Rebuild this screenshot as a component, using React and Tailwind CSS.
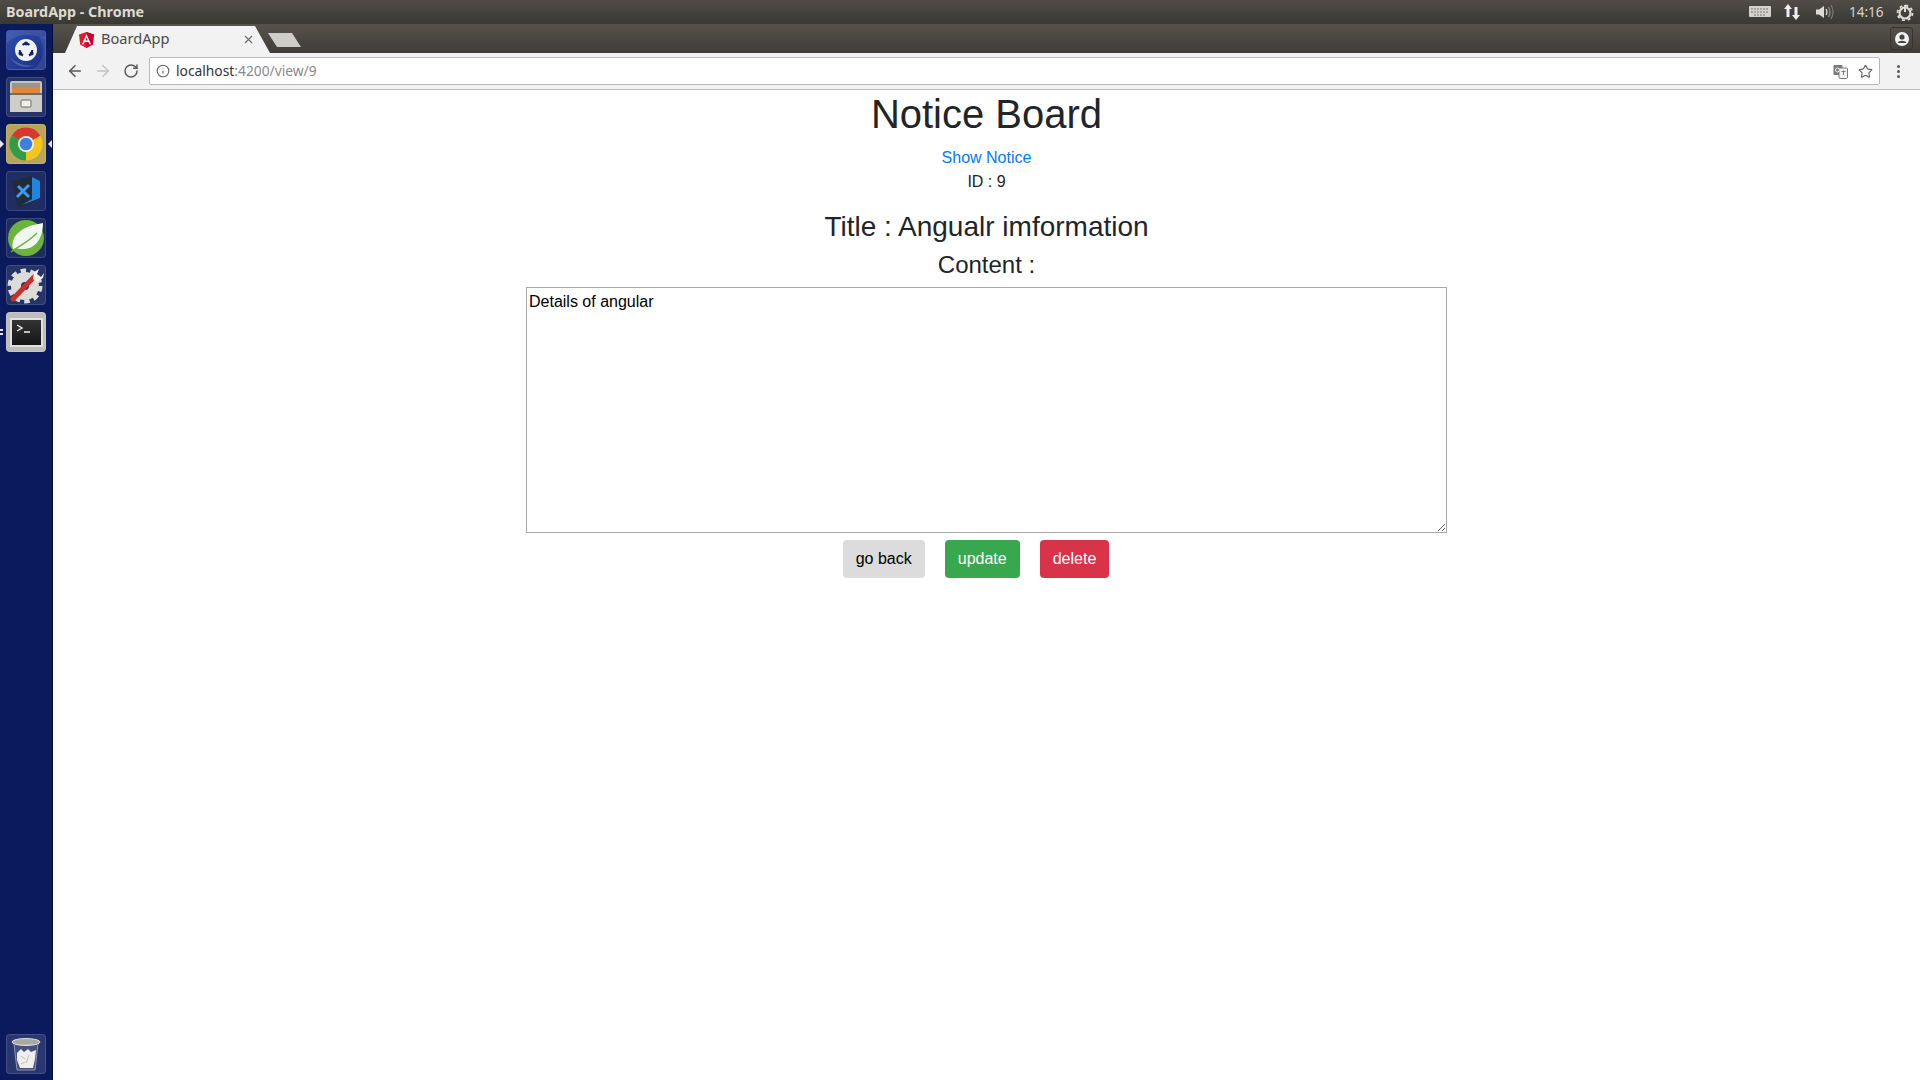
import React from "react";
import { ArrowLeft, ArrowRight, RotateCw, Info, Star, X } from "lucide-react";

const Tile = ({ className = "", children }) => (
  <div className={`w-10 h-10 rounded-[4px] flex items-center justify-center overflow-hidden shrink-0 border border-[#ffffff22] ${className}`}>
    {children}
  </div>
);

const Launcher = () => (
  <aside className="w-[53px] shrink-0 flex flex-col items-center bg-[#0a1a5c] border-r border-[#050d30] pt-[6px] pb-[6px] gap-[7px] relative">
    <Tile className="bg-linear-to-br from-[#2f4dac] to-[#1b2f86]">
      <svg width="38" height="38" viewBox="0 0 38 38">
        <path d="M0 12 C10 2 26 2 38 8 V0 H0 Z" fill="#ffffff18" />
        <path d="M26 38 C38 30 38 16 32 6 L38 6 V38 Z" fill="#ffffff18" />
        <path d="M3 26 C8 36 20 38 28 34 C18 36 8 32 3 26 Z" fill="#ffffff30" />
        <circle cx="19" cy="19" r="11" fill="#f1f2f8" />
        <path d="M15.500 13.800 A6.300 6.300 0 0 1 22.500 13.800 M25.300 19 A6.300 6.300 0 0 1 22 24.500 M16 24.500 A6.300 6.300 0 0 1 12.700 19" fill="none" stroke="#17245f" strokeWidth="2" />
        <circle cx="19" cy="12.500" r="1.900" fill="#17245f" />
        <circle cx="13.300" cy="22.500" r="1.900" fill="#17245f" />
        <circle cx="24.700" cy="22.500" r="1.900" fill="#17245f" />
      </svg>
    </Tile>
    <Tile className="bg-[#263468]">
      <svg width="36" height="36" viewBox="0 0 36 36">
        <path d="M2 4 Q2 2 4 2 H32 Q34 2 34 4 V33 H2 Z" fill="#c5c3bd" />
        <rect x="4" y="4" width="28" height="6" fill="#98958e" />
        <rect x="4" y="9" width="28" height="5" fill="#e2873a" />
        <rect x="2" y="14" width="32" height="2" fill="#6f6d67" />
        <rect x="2" y="16" width="32" height="17" fill="#cfcdc8" />
        <rect x="13" y="21" width="10" height="7" rx="1" fill="#efefed" stroke="#6f6d68" />
      </svg>
    </Tile>
    <Tile className="bg-[#b7a55c]">
      <svg width="36" height="36" viewBox="0 0 36 36">
        <path d="M18 18 L3.700 9.700 A16.500 16.500 0 0 1 32.300 9.700 Z" fill="#d9382f" />
        <path d="M18 18 L32.300 9.700 A16.500 16.500 0 0 1 18 34.500 Z" fill="#f4c51f" />
        <path d="M18 18 L18 34.500 A16.500 16.500 0 0 1 3.700 9.700 Z" fill="#2f9e44" />
        <circle cx="18" cy="18" r="8" fill="#f3f3f3" />
        <circle cx="18" cy="18" r="6.300" fill="#3f7fe0" />
      </svg>
    </Tile>
    <Tile className="bg-[#1f2d63]">
      <svg width="38" height="38" viewBox="0 0 38 38">
        <path d="M5 9 L25 4 L33 27 L11 36 Z" fill="#232a3a" />
        <path d="M25 5 L33 9 V26 L15 33 L25 27 Z" fill="#1f86df" />
        <path d="M10 25 L22 13 M11 14 L22 25" stroke="#3d9bf0" strokeWidth="3" />
      </svg>
    </Tile>
    <Tile className="bg-[#1f2d63]">
      <svg width="38" height="38" viewBox="0 0 38 38">
        <circle cx="19" cy="19" r="18" fill="#6db33f" />
        <path d="M6 30 C3 16 16 7 36 4 C36 20 28 31 14 30 C11 29.500 9 29 6 30 Z" fill="#f2f6ee" />
        <path d="M4 33 C12 27 20 24 30 14" fill="none" stroke="#6db33f" strokeWidth="1.500" />
      </svg>
    </Tile>
    <Tile className="bg-[#263468]">
      <svg width="38" height="38" viewBox="0 0 38 38">
        <circle cx="18" cy="20" r="9" fill="none" stroke="#dcdcd9" strokeWidth="10" />
        <circle cx="18" cy="20" r="15.500" fill="none" stroke="#dcdcd9" strokeWidth="4" strokeDasharray="5.500 4.240" />
        <path d="M6 33 L27 11" stroke="#c9302c" strokeWidth="5" strokeLinecap="round" />
        <path d="M26 13 L27 6 L32 3 L30 8 L34 11 L37 7 L36 12 L30 16 Z" fill="#efefed" />
      </svg>
    </Tile>
    <Tile className="bg-[#bdbdbb]">
      <div className="w-[33px] h-[29px] bg-linear-to-b from-[#343434] to-[#161616] border-2 border-[#e0e0de] relative">
        <svg width="29" height="25" viewBox="0 0 29 25" className="absolute left-0 top-0">
          <path d="M5 5 L10 8 L5 11" fill="none" stroke="#f2f2f2" strokeWidth="1.400" />
          <path d="M12 12 H18" stroke="#f2f2f2" strokeWidth="1.400" />
        </svg>
      </div>
    </Tile>
    <div className="flex-1" />
    <Tile className="bg-[#2a3670]">
      <svg width="34" height="36" viewBox="0 0 34 36">
        <ellipse cx="17" cy="6" rx="14" ry="3.500" fill="#a9a9a4" stroke="#dcdcd9" />
        <path d="M5 8 L8 34 H26 L29 8" fill="#ffffff20" stroke="#8f94ae" />
        <path d="M8 17 L12 13 L15 16 L19 13 L22 16 L27 14 L26 23 L24 32 H11 L8 24 Z" fill="#eeeeee" />
        <path d="M12 20 L16 23 M20 19 L17 27 M12 28 L16 26" stroke="#bcbcbc" />
      </svg>
    </Tile>
    <span className="absolute left-0 top-[116px] w-0 h-0 border-y-[4px] border-y-transparent border-l-[4px] border-l-[#e8e8e8]" />
    <span className="absolute right-0 top-[116px] w-0 h-0 border-y-[4px] border-y-transparent border-r-[4px] border-r-[#e8e8e8]" />
    <span className="absolute left-0 top-[305px] w-[3px] h-[2px] bg-[#e8e8e8]" />
    <span className="absolute left-0 top-[309px] w-[3px] h-[2px] bg-[#e8e8e8]" />
  </aside>
);

const TopBar = () => (
  <header className="h-6 shrink-0 bg-linear-to-b from-[#4f4d46] to-[#3a3833] flex items-center justify-between pl-[6px] pr-[6px] font-['Noto_Sans',sans-serif]">
    <span className="text-[14.3px] font-bold text-[#dfdbd2]">BoardApp - Chrome</span>
    <div className="flex items-center gap-[9px] text-[#dfdbd2]">
      <svg width="22" height="14" viewBox="0 0 22 14">
        <rect x="0" y="1" width="22" height="11" rx="1" fill="#d4d2cb" />
        <path d="M2 4 H19 M2 7 H19 M5 10 H17" stroke="#77756e" strokeWidth="1.200" strokeDasharray="2 1" />
      </svg>
      <svg width="18" height="18" viewBox="0 0 18 18" className="ml-[3px]">
        <path d="M5 1 L9 6 H6.500 V14 H3.500 V6 H1 Z" fill="#efefef" />
        <path d="M13 17 L17 12 H14.500 V4 H11.500 V12 H9 Z" fill="#efefef" />
      </svg>
      <svg width="20" height="18" viewBox="0 0 20 18" className="ml-[5px]">
        <path d="M1 6.500 H4 L9 3 V15 L4 11.500 H1 Z" fill="#dcdad3" />
        <path d="M11 6 Q13 9 11 12" fill="none" stroke="#dcdad3" strokeWidth="1.300" />
        <path d="M13.500 4 Q16.500 9 13.500 14" fill="none" stroke="#8f8d86" strokeWidth="1.300" />
        <path d="M16 2 Q20 9 16 16" fill="none" stroke="#77756e" strokeWidth="1.300" />
      </svg>
      <span className="text-[13.5px] ml-[5px] w-[36px] text-[#d8d5cc]">14:16</span>
      <svg width="18" height="18" viewBox="0 0 18 18" className="ml-[2px]">
        <circle cx="9" cy="10" r="5.500" fill="none" stroke="#dfdbd2" strokeWidth="2.200" />
        <circle cx="9" cy="10" r="7.500" fill="none" stroke="#dfdbd2" strokeWidth="1.800" strokeDasharray="3 2.890" />
        <path d="M9 2 V9" stroke="#dfdbd2" strokeWidth="2" />
      </svg>
    </div>
  </header>
);

const AngularIcon = () => (
  <svg width="15" height="16" viewBox="0 0 15 16" className="shrink-0">
    <path d="M7.500 0 L15 2.600 L13.800 12.600 L7.500 16 L1.200 12.600 L0 2.600 Z" fill="#dd1b31" />
    <path d="M7.500 0 L15 2.600 L13.800 12.600 L7.500 16 Z" fill="#c3002f" />
    <path d="M7.500 2 L3 12.300 H4.700 L5.600 10 H9.400 L10.300 12.300 H12 Z M6.300 8.600 L7.500 5.700 L8.700 8.600 Z" fill="#ffffff" />
  </svg>
);

const TabStrip = () => (
  <div className="h-[29px] shrink-0 bg-linear-to-b from-[#55534a] to-[#3f3d37] flex items-end relative font-['Noto_Sans',sans-serif]">
    <div className="ml-[12px] w-[205px] h-[27px] bg-[#f2f2f2] [clip-path:polygon(0_100%,12px_0,190px_0,100%_100%)] flex items-center pl-[14px] pr-[15px] gap-[7px]">
      <AngularIcon />
      <span className="text-[14.6px] text-[#4a4a4a] flex-1 -translate-y-[1px]">BoardApp</span>
      <X size={13} strokeWidth={2} className="text-[#6a6a6a]" />
    </div>
    <div className="-ml-[2px] mb-[6px] w-[33px] h-[14px] bg-[#cfcdc8] [clip-path:polygon(0_0,24px_0,100%_100%,9px_100%)]" />
    <div className="absolute right-[7px] top-[3px] w-[23px] h-[23px] rounded-[3px] border border-[#35332e] flex items-center justify-center">
      <svg width="14" height="14" viewBox="0 0 14 14">
        <circle cx="7" cy="7" r="7" fill="#f2f2f2" />
        <circle cx="7" cy="5" r="2.600" fill="#47453f" />
        <path d="M2.500 11 C3.500 8 10.500 8 11.500 11 Z" fill="#47453f" />
      </svg>
    </div>
  </div>
);

const Toolbar = () => (
  <div className="h-[37px] shrink-0 bg-[#f2f2f2] border-b border-[#bdbdbd] flex items-center font-['Noto_Sans',sans-serif]">
    <div className="flex items-center w-[96px] pl-[13px] gap-[10px]">
      <ArrowLeft size={18} strokeWidth={2.2} className="text-[#5a5a5a]" />
      <ArrowRight size={18} strokeWidth={2.2} className="text-[#c4c4c4]" />
      <RotateCw size={16} strokeWidth={2.2} className="text-[#5a5a5a] ml-[1px]" />
    </div>
    <div className="w-[1731px] h-[28px] bg-white border border-[#b9b9b9] rounded-[2px] flex items-center pl-[6px] pr-[6px]">
      <Info size={14} strokeWidth={1.8} className="text-[#5f5f5f]" />
      <span className="ml-[6px] text-[13.8px] text-[#333333] flex-1">
        localhost<span className="text-[#8a8a8a]">:4200/view/9</span>
      </span>
      <svg width="15" height="15" viewBox="0 0 15 15" className="translate-x-[1px]">
        <rect x="0.500" y="1" width="9" height="10" rx="1" fill="#7a7a7a" />
        <rect x="6" y="4" width="8.500" height="10.500" rx="1" fill="#f2f2f2" stroke="#7a7a7a" />
        <path d="M8.500 7.500 H12.500 M10.500 6.500 V11" stroke="#7a7a7a" />
        <circle cx="4.500" cy="6" r="2" fill="none" stroke="#f2f2f2" />
      </svg>
      <Star size={15} strokeWidth={1.8} className="text-[#5f5f5f] ml-[11px]" />
    </div>
    <div className="flex-1 flex justify-center flex-col items-center gap-[2px] pr-[3px]">
      <span className="w-[3px] h-[3px] rounded-full bg-[#5a5a5a]" />
      <span className="w-[3px] h-[3px] rounded-full bg-[#5a5a5a]" />
      <span className="w-[3px] h-[3px] rounded-full bg-[#5a5a5a]" />
    </div>
  </div>
);

export default function App() {
  return (
    <div className="w-[1920px] h-[1080px] overflow-hidden flex flex-col bg-white font-['Liberation_Sans',Arial,sans-serif]">
      <TopBar />
      <div className="flex-1 flex min-h-0">
        <Launcher />
        <div className="flex-1 flex flex-col min-w-0">
          <TabStrip />
          <Toolbar />
          <main className="flex-1 flex flex-col items-center text-center text-[#212529] text-base leading-6">
            <h1 className="text-[40px] leading-[48px] mb-2 font-medium">Notice Board</h1>
            <a className="text-[#007bff]">Show Notice</a>
            <p className="mb-4">ID : 9</p>
            <h3 className="text-[28px] leading-[33.6px] mb-[7px] font-medium">Title : Angualr imformation</h3>
            <h4 className="text-2xl leading-[28.8px] mb-2 font-medium">Content :</h4>
            <textarea
              readOnly
              value="Details of angular"
              className="w-[921px] h-[246px] border border-[#a9a9a9] px-[2px] pt-[5px] pb-[2px] text-black text-base leading-[normal] font-['Liberation_Sans',Arial,sans-serif] outline-none resize"
            />
            <div className="flex gap-5 mt-[7px] pr-[21px]">
              <button className="h-[38px] px-[13px] rounded bg-[#dcdcdc] text-black">go back</button>
              <button className="h-[38px] px-[13px] rounded bg-[#38a84f] text-white">update</button>
              <button className="h-[38px] px-[13px] rounded bg-[#d9334a] text-white">delete</button>
            </div>
          </main>
        </div>
      </div>
    </div>
  );
}
